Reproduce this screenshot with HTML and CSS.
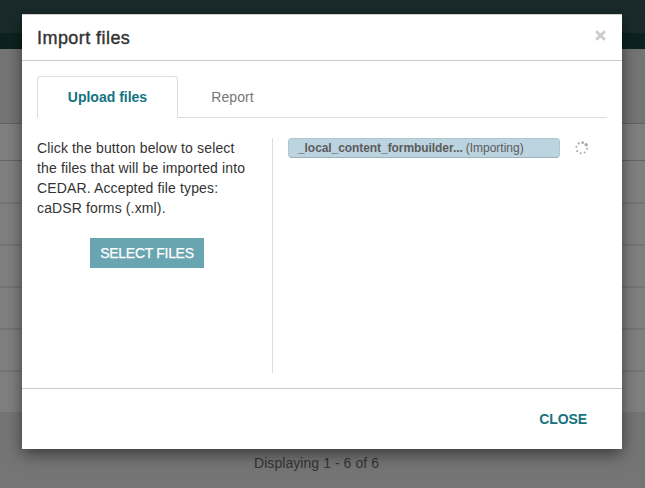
FILE: index.html
```html
<!DOCTYPE html>
<html lang="en">
<head>
<meta charset="utf-8">
<title>Import files</title>
<link rel="stylesheet" href="styles.css">
</head>
<body>
<div class="page">
  <div class="topbar"></div>
  <div class="toolbar"></div>
  <div class="table">
    <div class="row head"></div>
    <div class="row first"></div>
    <div class="row"></div>
    <div class="row"></div>
    <div class="row"></div>
    <div class="row"></div>
    <div class="row last"></div>
  </div>
  <div class="count"><span>Displaying 1 - 6 of 6</span></div>
</div>
<div class="modal" role="dialog">
  <header class="modal-header">
    <h1>Import files</h1>
    <button class="dismiss" aria-label="Dismiss"><svg width="11" height="11" viewBox="0 0 11 11"><path d="M1.2 1.2L9.8 9.8M9.8 1.2L1.2 9.8"/></svg></button>
  </header>
  <div class="modal-body">
    <nav class="tabs">
      <a class="tab active"><span>Upload files</span></a>
      <a class="tab"><span>Report</span></a>
    </nav>
    <div class="columns">
      <section class="intro">
        <p>Click the button below to select<br>the files that will be imported into<br>CEDAR. Accepted file types:<br>caDSR forms (.xml).</p>
        <button class="select"><span>SELECT FILES</span></button>
      </section>
      <section class="files">
        <div class="file"><b>_local_content_formbuilder...</b><span>(Importing)</span></div>
        <svg class="spinner" width="14" height="14" viewBox="0 0 14 14">
          <circle cx="7.6" cy="1.7" r="1.4"/><circle cx="11.2" cy="3.8" r="1.7"/><circle cx="12.1" cy="7.8" r="1"/><circle cx="9.6" cy="11.6" r="1"/><circle cx="5.6" cy="12.3" r="1"/><circle cx="2.1" cy="9.9" r="1"/><circle cx="1.4" cy="5.8" r="1"/><circle cx="3.7" cy="2.4" r="1.15"/>
        </svg>
      </section>
    </div>
  </div>
  <footer class="modal-footer"><button class="close"><span>CLOSE</span></button></footer>
</div>
</body>
</html>
```
FILE: styles.css
```css
* { box-sizing: border-box; }
body {
  margin: 0;
  height: 488px;
  overflow: hidden;
  font: 14px/20px "Liberation Sans", Arial, sans-serif;
  color: #333;
}
button { padding: 0; border: 0; background: none; font: inherit; }
.page { height: 488px; background: #757575; }
.topbar { height: 49px; background: #1a2a2a; border-bottom: 16px solid #0d2220; }
.toolbar { height: 74px; }
.table { background: #808080; border-top: 1px solid #636363; }
.row { height: 42px; border-bottom: 2px solid #757575; }
.row.head { height: 37px; border-bottom: 1px solid #636363; }
.row.first { height: 43px; }
.row.last { height: 40px; border-bottom: 0; }
.count { padding: 41px 0 0 254px; letter-spacing: .06px; }
.modal {
  position: absolute;
  left: 22px;
  top: 14px;
  width: 600px;
  height: 435px;
  display: flex;
  flex-direction: column;
  background: #fff;
  border-top: 1px solid #ccc;
  box-shadow: 0 5px 15px rgba(0, 0, 0, .5);
}
.modal-header {
  display: flex;
  justify-content: space-between;
  height: 46px;
  padding: 12px 16px 0 15px;
  border-bottom: 1px solid #ccc;
}
h1 { margin: 0; font-size: 18px; line-height: 22px; font-weight: 400; letter-spacing: .44px; -webkit-text-stroke: .4px #333; }
.dismiss { width: 11px; height: 11px; margin-top: 3px; }
.dismiss svg { display: block; fill: none; stroke: #ccc; stroke-width: 2.8; }
.modal-body { flex: 1; padding: 15px; }
.tabs { display: flex; height: 42px; border-bottom: 1px solid #ddd; }
.tab { display: flex; justify-content: center; width: 109px; height: 42px; padding-top: 11px; color: #777; letter-spacing: .1px; }
.tab.active {
  width: 141px;
  padding-top: 10px;
  color: #14737f;
  font-weight: 700;
  letter-spacing: 0;
  background: #fff;
  border: 1px solid #ddd;
  border-bottom: 0;
  border-radius: 4px 4px 0 0;
}
.columns { display: flex; height: 235px; margin-top: 20px; }
.intro { width: 236px; border-right: 1px solid #ddd; }
p { margin: 0 0 20px; white-space: nowrap; letter-spacing: .14px; }
.select { display: block; width: 114px; height: 30px; margin-left: 53px; background: #69a5b0; color: #fff; letter-spacing: -.3px; -webkit-text-stroke: .25px #fff; }
.files { display: flex; align-items: flex-start; padding-left: 15px; }
.file {
  display: flex;
  gap: 3px;
  width: 272px;
  height: 20px;
  padding-left: 9px;
  font-size: 12px;
  line-height: 18px;
  letter-spacing: -.07px;
  color: #5c5c5c;
  white-space: nowrap;
  background: #bcd3e0;
  border: 1px solid #b0c7d3;
  border-bottom-color: #9cb2bf;
  border-radius: 4px;
}
.file span { letter-spacing: 0; }
.spinner { margin: 3px 0 0 15px; fill: #aaa; }
.modal-footer { display: flex; justify-content: flex-end; align-items: center; height: 61px; padding-right: 35px; border-top: 1px solid #ccc; }
.close { color: #14737f; font-weight: 700; letter-spacing: -.1px; }
```
